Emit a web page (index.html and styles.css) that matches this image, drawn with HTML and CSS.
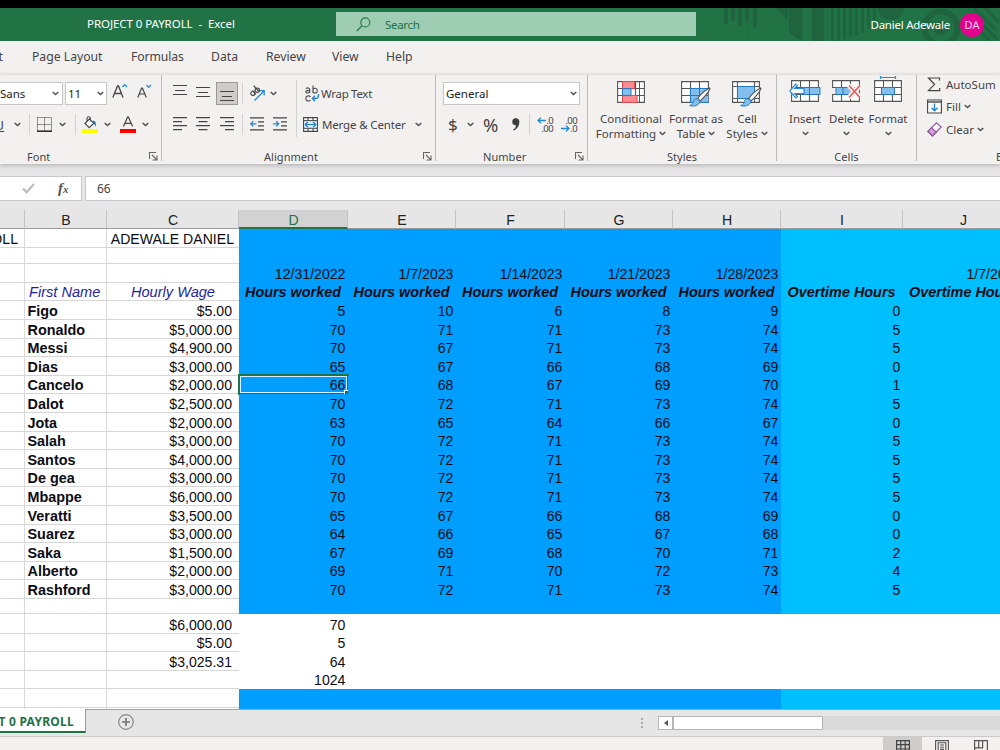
FILE: index.html
```html
<!DOCTYPE html>
<html lang="en">
<head>
<meta charset="utf-8">
<title>PROJECT 0 PAYROLL - Excel</title>
<link rel="stylesheet" href="styles.css">
</head>
<body>
<svg class="defs" aria-hidden="true">
  <symbol id="chev" viewBox="0 0 7 5"><path d="M.7 .9 3.5 3.6 6.3 .9" fill="none" stroke="#505050" stroke-width="1.4"/></symbol>
  <symbol id="launch" viewBox="0 0 9 9"><path d="M.5 7V.5H7M3 3l4.5 4.5M8 3.500V8H3.500" fill="none" stroke="#666" stroke-width="1.100"/></symbol>
  <symbol id="grid" viewBox="0 0 28 22"><path d="M.6.6h26.800v20.800H.6zM.6 7.500h26.800M.6 14.500h26.800M9.500.6v20.800M18.500.6v20.800" fill="#fff" stroke="#555" stroke-width="1.100"/></symbol>
  <symbol id="brush" viewBox="0 0 22 20"><path d="M20.500 1C16 3.500 11 8 8.600 11.500l2.600 2.400C15 10.500 19.500 5 21 1.500z" fill="#fff" stroke="#555" stroke-width="1.100"/><path d="M8.300 11.800c-2-.3-3.600.8-4 3C3.800 17 2.500 18.300.6 18.500c3.400 1.300 9.500.8 10.400-4.500z" fill="#83beec" stroke="#2478be" stroke-width=".9"/></symbol>
</svg>

<div class="app">
  <div class="top-strip"></div>
  <header class="titlebar">
    <div class="doc-title">PROJECT 0 PAYROLL&nbsp; -&nbsp; Excel</div>
    <div class="search">
      <svg width="15" height="15" viewBox="0 0 15 15"><circle cx="9.300" cy="5.400" r="4.500" fill="none" stroke="#2f8055" stroke-width="1.200"/><path d="M6 8.700.8 14" stroke="#2f8055" stroke-width="1.400"/></svg>
      <span>Search</span>
    </div>
    <div class="account">
      <svg class="pattern" width="290" height="33" viewBox="0 0 290 33">
        <g fill="#1f633f">
          <path d="M14 0h4v16h-4zM21 0h4v13h-4zM28 0h4v18h-4zM35 0h4v13h-4zM43 0h4v20h-4z"/>
          <path d="M66 0h12v13zM79 0h13v33l-13-8zM102 0h12v33h-12z"/>
          <path d="M121 0h3v33h-3zM127 0h3v33h-3zM133 0h3v31h-3zM139 0h3v29h-3zM145 0h3v27h-3zM151 0h3v25h-3zM157 0h3v21h-3zM163 0h3v14h-3z"/>
          <path d="M168 0a13 12 0 0 0 26 0z"/><circle cx="231" cy="20" r="7"/>
        </g>
        <circle cx="231" cy="20" r="16.500" fill="none" stroke="#1f633f" stroke-width="6"/>
        <path d="M37.500 0v32" stroke="#1f633f" stroke-dasharray="1 1"/>
        <path d="m264 0 22 22M273-2l16 16M268 12l20 20M270 23l12 12" stroke="#1f633f" stroke-width="3"/>
      </svg>
      <span class="user">Daniel Adewale</span>
      <span class="avatar">DA</span>
    </div>
  </header>

  <nav class="tabs">
    <span class="tab t-insert">Insert</span><span class="tab t-page">Page Layout</span><span class="tab t-form">Formulas</span><span class="tab t-data">Data</span><span class="tab t-rev">Review</span><span class="tab t-view">View</span><span class="tab t-help">Help</span>
  </nav>

  <section class="ribbon">
    <div class="group g-font">
      <div class="row r1">
        <div class="box name"><span>Sans</span><svg class="chev"><use href="#chev"/></svg></div>
        <div class="box size"><span>11</span><svg class="chev"><use href="#chev"/></svg></div>
        <svg class="grow" width="16" height="16" viewBox="0 0 16 16"><path d="M.8 14.500 5.500 3h1L11 14.500M2.600 10.500h6.700" fill="none" stroke="#444" stroke-width="1.300"/><path d="m10.500 4 2.200-2.300L15 4" fill="none" stroke="#1e88cf" stroke-width="1.200"/></svg>
        <svg class="shrink" width="15" height="16" viewBox="0 0 15 16"><path d="M.8 14.500 4.600 5h.8l3.900 9.500M2.300 11h5.500" fill="none" stroke="#444" stroke-width="1.200"/><path d="m9.500 2 2.200 2.300L14 2" fill="none" stroke="#1e88cf" stroke-width="1.200"/></svg>
      </div>
      <div class="row r2">
        <span class="underline">U</span><svg class="chev c1"><use href="#chev"/></svg><i class="sep"></i>
        <svg class="borders" width="15" height="15" viewBox="0 0 15 15"><path d="M.5.5h14v13.500M.5.500v13.500M7.500.5v13.500M.5 7.500h14" fill="none" stroke="#333" stroke-dasharray="1 1"/><path d="M0 14.200h15" stroke="#222" stroke-width="1.500"/></svg><svg class="chev c2"><use href="#chev"/></svg><i class="sep s2"></i>
        <svg class="fill" width="16" height="17" viewBox="0 0 16 17"><path d="M3 7.500 7.500 2.800l4.200 4.700-4.500 4.200zM5 5.300V2.500a1.700 1.700 0 0 1 3.400 0v3" fill="#fff" stroke="#444" stroke-width="1.100"/><path d="M10.500 4.500c3 .2 3.800 2 3.300 6.500-1-2-1.400-3.500-2.300-4z" fill="#1c72b8"/><path d="M0 13h16v4H0z" fill="#ff0"/></svg><svg class="chev c3"><use href="#chev"/></svg>
        <svg class="fcolor" width="16" height="17" viewBox="0 0 16 17"><path d="M3.500 10.500 7.700.8h.6l4.200 9.700M5 7.300h6" fill="none" stroke="#444" stroke-width="1.200"/><path d="M0 13h16v4H0z" fill="red"/></svg><svg class="chev c4"><use href="#chev"/></svg>
      </div>
      <div class="label"><span>Font</span><svg class="launch"><use href="#launch"/></svg></div>
    </div>

    <div class="group g-align">
      <div class="align-body">
        <div class="align-grid">
          <svg width="14" height="24" viewBox="0 0 14 24"><path d="M0 4.500h14M2 9.500h10M0 13.500h14" stroke="#444" stroke-width="1.200"/></svg>
          <svg width="14" height="24" viewBox="0 0 14 24"><path d="M0 6.500h14M2 11.500h10M0 15.500h14" stroke="#444" stroke-width="1.200"/></svg>
          <span class="pressed"><svg width="14" height="22" viewBox="0 0 14 22"><path d="M0 9.500h14M2 14.500h10M0 18.500h14" stroke="#444" stroke-width="1.200"/></svg></span>
          <i class="sep"></i>
          <span class="orient"><svg width="17" height="17" viewBox="0 0 17 17"><g fill="none" stroke="#444" stroke-width="1.200"><circle cx="3.800" cy="8.500" r="2"/><path d="m3.500 5.500 3.400 3.800"/><circle cx="8.300" cy="5.200" r="2.200"/><path d="M4.700.7 10 6.600"/></g><path d="M5.500 15.500 15 6M10.500 5.700h4.700v4.800" fill="none" stroke="#2a86cc" stroke-width="1.300"/></svg><svg class="chev"><use href="#chev"/></svg></span>
          <svg width="14" height="14" viewBox="0 0 14 14"><path d="M0 .6h14M0 4.600h9M0 8.600h14M0 12.600h9" stroke="#444" stroke-width="1.200"/></svg>
          <svg width="14" height="14" viewBox="0 0 14 14"><path d="M0 .6h14M2.500 4.600h9M0 8.600h14M2.500 12.600h9" stroke="#444" stroke-width="1.200"/></svg>
          <svg width="14" height="14" viewBox="0 0 14 14"><path d="M0 .6h14M5 4.600h9M0 8.600h14M5 12.600h9" stroke="#444" stroke-width="1.200"/></svg>
          <i class="sep"></i>
          <span class="indents"><svg width="14" height="14" viewBox="0 0 14 14"><path d="M0 .8h14M8 4.800h6M8 8.800h6M0 12.800h14" stroke="#444" stroke-width="1.200"/><path d="M6.500 6.800H1M3.300 4.200.8 6.800l2.500 2.600" fill="none" stroke="#2a86cc" stroke-width="1.300"/></svg><svg width="14" height="14" viewBox="0 0 14 14"><path d="M0 .8h14M8 4.800h6M8 8.800h6M0 12.800h14" stroke="#444" stroke-width="1.200"/><path d="M0 6.800h5.500M3.200 4.200l2.500 2.600-2.500 2.600" fill="none" stroke="#2a86cc" stroke-width="1.300"/></svg></span>
        </div>
        <i class="sep tall"></i>
        <div class="wrap-col">
          <div class="cmd"><svg width="15" height="17" viewBox="0 0 15 17"><g fill="none" stroke="#444" stroke-width="1.100"><path d="M1 3.500c1.500-1 3.700-.7 3.700 1V8M4.700 5.300C2.500 5.300.8 5.700.8 6.800c0 1.700 3 1.500 3.900 0M8 .5V8M8 4.500c1-2 4.300-1.500 4.300 1.200S9 8.800 8 6.800M5.500 11.700C3.500 10.200.8 11 .8 13.500s2.700 3.200 4.700 1.800"/></g><path d="M13.500 9v1.500c0 2-1.500 3-3.500 3H7.500M10 10.800l-2.700 2.700 2.700 2.700" fill="none" stroke="#2a86cc" stroke-width="1.400"/></svg><span class="tx-wrap">Wrap Text</span></div>
          <div class="cmd"><svg width="15" height="15" viewBox="0 0 15 15"><path d="M.6.600h13.800v13.800H.6zM5 .5v3M10 .5v3M5 11.500v3M10 11.500v3" fill="#fff" stroke="#444" stroke-width="1.100"/><path d="M.6 3.600h13.800v7.700H.6z" fill="#d8ecfa" stroke="#444"/><path d="M2.500 7.500h10M4.800 5 2.300 7.500l2.500 2.500M10.200 5l2.500 2.500-2.500 2.500" fill="none" stroke="#1d80ca" stroke-width="1.200"/></svg><span class="tx-merge">Merge &amp; Center</span><svg class="chev"><use href="#chev"/></svg></div>
        </div>
      </div>
      <div class="label"><span>Alignment</span><svg class="launch"><use href="#launch"/></svg></div>
    </div>

    <div class="group g-num">
      <div class="row r1"><div class="box general"><span>General</span><svg class="chev"><use href="#chev"/></svg></div></div>
      <div class="row r2 numrow">
        <span class="dollar">$</span><svg class="chev"><use href="#chev"/></svg><span class="pct">%</span>
        <svg class="comma" width="8" height="13" viewBox="0 0 8 13"><path d="M3.600.3A3.300 3.300 0 0 1 7.300 4c0 4-2.300 7.300-5.800 8.500l-.5-.8C3 10.500 4 9 4 7.300A3.500 3.500 0 0 1 3.600.3" fill="#3c3c3c"/></svg>
        <i class="sep"></i>
        <span class="dec"><span><svg width="9" height="7" viewBox="0 0 9 7"><path d="M9 3.500H1M4 .6 1 3.500l3 2.900" fill="none" stroke="#1e88d4" stroke-width="1.300"/></svg>.0</span><span>.00</span></span>
        <span class="dec dec2"><span>.00</span><span><svg width="9" height="7" viewBox="0 0 9 7"><path d="M0 3.500h8M5 .6l3 2.900-3 2.900" fill="none" stroke="#1e88d4" stroke-width="1.300"/></svg>.0</span></span>
      </div>
      <div class="label"><span>Number</span><svg class="launch"><use href="#launch"/></svg></div>
    </div>

    <div class="group g-styles">
      <div class="bigs">
        <div class="big b-cond"><svg width="28" height="26" viewBox="0 0 28 26"><use href="#grid" width="28" height="22" y="2"/><path d="M22.500 2.500v21" stroke="#555"/><path d="M5.500 2.600h12v7h-12zM5.500 16.500h14.500v6.900H5.500z" fill="#ff8c92" stroke="#e8484e"/><path d="M5.500 9.600h8.500v7H5.500z" fill="#83beec" stroke="#2478be"/></svg><span class="t1">Conditional</span><span class="t2">Formatting <svg class="chev"><use href="#chev"/></svg></span></div>
        <div class="big b-fmt"><svg width="31" height="28" viewBox="0 0 31 28"><use href="#grid" width="28" height="22" y="2"/><path d="M9.500 9.500H27.400v13.900H9.500z" fill="#83beec"/><path d="M9.500 9.500h17.900M9.500 16.500h17.900M18.500 9.500v14M9.500 9.500v14M9.500 23.400h17.900" stroke="#2478be"/><use href="#brush" x="8" y="8" width="22" height="20"/></svg><span class="t1">Format as</span><span class="t2">Table <svg class="chev"><use href="#chev"/></svg></span></div>
        <div class="big b-cell"><svg width="31" height="28" viewBox="0 0 31 28"><path d="M.6 2.600h26.800v20.800H.6zM.6 7.500h26.800M.6 19.500h26.800M5.500 2.600v20.800M22.500 2.600v20.800" fill="#fff" stroke="#555" stroke-width="1.100"/><path d="M5.500 7.500h17v12h-17z" fill="#83beec" stroke="#2478be"/><use href="#brush" x="8" y="8" width="22" height="20"/></svg><span class="t1">Cell</span><span class="t2">Styles <svg class="chev"><use href="#chev"/></svg></span></div>
      </div>
      <div class="label"><span>Styles</span></div>
    </div>

    <div class="group g-cells">
      <div class="bigs">
        <div class="big b-ins"><svg width="32" height="28" viewBox="0 0 32 28"><use href="#grid" x="2" width="28" height="22" y="4"/><path d="M11 11.500h20v7H11z" fill="#83beec" stroke="#2478be"/><path d="M20.500 11.500v7" stroke="#2478be"/><path d="M15 12.500H5.500L8.500 9.500 6.700 8 .7 15l6 7 1.800-1.500-3-3H15z" fill="#f4f9fd" stroke="#2a8bd2" stroke-width="1.200"/></svg><span class="t1">Insert</span><svg class="chev"><use href="#chev"/></svg></div>
        <div class="big b-del"><svg width="31" height="28" viewBox="0 0 31 28"><use href="#grid" x="1" width="28" height="22" y="4"/><path d="M0 12h5v6H0z" fill="#f3f1f0"/><path d="M5 11.500h14l2 3.500-2 3.500H5z" fill="#83beec" stroke="#2478be"/><path d="M12 11.500v7" stroke="#2478be"/><path d="m18 9.500 11 12M29 9.500l-11 12" stroke="#f3f1f0" stroke-width="5"/><path d="m18 9.500 11 12M29 9.500l-11 12" stroke="#f0555a" stroke-width="1.500"/></svg><span class="t1">Delete</span><svg class="chev"><use href="#chev"/></svg></div>
        <div class="big b-for"><svg width="28" height="28" viewBox="0 0 28 28"><use href="#grid" width="28" height="22" y="4"/><path d="M7.500 11.500h13v7h-13z" fill="#83beec" stroke="#2478be"/><path d="M6.500 1.500h15M6.500 0v3M21.500 0v3" stroke="#2a8bd2" stroke-width="1.200"/></svg><span class="t1">Format</span><svg class="chev"><use href="#chev"/></svg></div>
      </div>
      <div class="label"><span>Cells</span></div>
    </div>

    <div class="group g-edit">
      <div class="editrows">
        <div class="cmd"><svg width="15" height="15" viewBox="0 0 15 15"><path d="M12.500 3.500V1H1.500l6 6.300-6 6.400h11.200V11" fill="none" stroke="#444" stroke-width="1.200"/></svg><span class="tx-auto">AutoSum</span></div>
        <div class="cmd"><svg width="15" height="15" viewBox="0 0 15 15"><path d="M.6 1h13.800v13H.6z" fill="#fff" stroke="#444" stroke-width="1.100"/><path d="M.6 3h13.800" stroke="#444" stroke-width="1.400"/><path d="M7.500 4.500v7M4.500 8.700l3 3 3-3" fill="none" stroke="#1e82cc" stroke-width="1.400"/></svg><span class="tx-fill">Fill</span><svg class="chev"><use href="#chev"/></svg></div>
        <div class="cmd"><svg width="15" height="15" viewBox="0 0 15 15"><path d="M9.500.8 14.200 5 5.500 14 .8 9.500z" fill="#fff" stroke="#8f5399" stroke-width="1.100"/><path d="M4.500 5.700 9.300 10l-3.800 4L.8 9.500z" fill="#cf9fd6" stroke="#8f5399" stroke-width="1.100"/></svg><span class="tx-clear">Clear</span><svg class="chev"><use href="#chev"/></svg></div>
      </div>
      <div class="label"><span>Editing</span></div>
    </div>
  </section>

  <section class="formula">
    <div class="fx-box">
      <svg width="13" height="11" viewBox="0 0 13 11"><path d="m1 5.500 3.500 3.800L12 1" fill="none" stroke="#bdbdbd" stroke-width="2.200"/></svg>
      <span class="fx">f<small>x</small></span>
    </div>
    <div class="fx-value">66</div>
  </section>

  <main class="sheet" id="sheet"></main>

  <footer class="sheetbar">
    <div class="sheet-tab">PROJECT 0 PAYROLL</div>
    <svg class="add" width="16" height="16" viewBox="0 0 16 16"><circle cx="8" cy="8" r="7.300" fill="none" stroke="#8a8a8a" stroke-width="1.200"/><path d="M8 4v8M4 8h8" stroke="#777" stroke-width="1.700"/></svg>
    <div class="dots"><i></i><i></i><i></i></div>
    <div class="scroll"><span class="arrow"></span><span class="thumb"></span></div>
  </footer>
  <div class="status">
    <span class="vw on"><svg width="14" height="14" viewBox="0 0 14 14"><path d="M.6.6h12.800v12.800H.6zM.6 4.700h12.800M.6 9h12.800M4.800.6v13M9.200.6v13" fill="none" stroke="#444" stroke-width="1.200"/></svg></span>
    <span class="vw"><svg width="14" height="14" viewBox="0 0 14 14"><path d="M.6.6h12.800v12.800H.6zM3.200 13V2.700h7.600V13M5 5h4M5 7.200h4M5 9.400h4" fill="none" stroke="#555" stroke-width="1.100"/></svg></span>
    <span class="vw"><svg width="14" height="14" viewBox="0 0 14 14"><path d="M.6 13.400V.6h12.800v12.800M.6 7.800h8V.6M4.700.6v7" fill="none" stroke="#555" stroke-width="1.200"/></svg></span>
  </div>
</div>
<script src="sheet.js"></script>
</body>
</html>
```
FILE: styles.css
```css
* { box-sizing: border-box; }
body { margin: 0; overflow: hidden; font-family: "Noto Sans", "Open Sans", sans-serif; font-size: 11.500px; color: #444; }
.defs { position: absolute; width: 0; height: 0; }
.app { width: 1000px; height: 750px; overflow: hidden; display: flex; flex-direction: column; background: #e6e6e6; }
svg { display: block; flex: none; }
.chev { width: 7px; height: 5px; }
.launch { width: 9px; height: 9px; }
span { white-space: nowrap; }

.top-strip { height: 8px; background: #000; flex: none; }
.titlebar { height: 33px; flex: none; background: #217346; display: flex; color: #fff; }
.doc-title { width: 336px; padding-left: 87px; line-height: 31px; font-size: 11.5px; white-space: nowrap; letter-spacing: -.06px; }
.search { width: 360px; height: 24px; margin-top: 4px; background: #9fcdb3; color: #217346; display: flex; align-items: center; padding-left: 20px; gap: 14px; letter-spacing: -.3px; }
.account { flex: 1; position: relative; display: flex; align-items: center; justify-content: flex-end; padding-right: 16px; gap: 10px; }
.pattern { position: absolute; left: 14px; top: 0; }
.user, .avatar { position: relative; }
.user { letter-spacing: -.25px; }
.avatar { width: 24px; height: 24px; border-radius: 50%; background: #e3008c; line-height: 24px; text-align: center; font-size: 11px; color: #ffd3ee; }

.tabs { height: 34px; flex: none; background: #f3f1f0; display: flex; line-height: 31px; font-size: 12.2px; }
.tab { flex: none; }
.t-insert { width: 32px; direction: rtl; padding-right: 29px; }
.t-page { width: 99px; } .t-form { width: 80px; letter-spacing: -.1px; } .t-data { width: 55px; } .t-rev { width: 66px; } .t-view { width: 54px; }

.ribbon { height: 89px; flex: none; display: flex; background: #f3f1f0; position: relative; box-shadow: 0 1px 5px rgba(0,0,0,.25); }
.group { height: 86px; flex: none; border-right: 1px solid #bdbbb9; display: flex; flex-direction: column; }
.g-font { width: 162px; } .g-align { width: 274px; } .g-num { width: 152px; } .g-styles { width: 189px; } .g-cells { width: 140px; } .g-edit { width: 180px; border: 0; }
.row { display: flex; align-items: center; height: 27px; flex: none; }
.r1 { height: 36px; }
.label { margin: auto 0 -3px; height: 15px; display: flex; align-items: center; font-size: 11px; padding-bottom: 1px; letter-spacing: .05px; }
.label .launch { margin-left: auto; margin-right: 3px; }
.box { height: 23px; background: #fff; border: 1px solid #c6c6c6; display: flex; align-items: center; justify-content: space-between; color: #222; padding-right: 2px; flex: none; }
.name { width: 63px; border-left: 0; padding-right: 3px; }
.size { width: 42px; margin-left: 2px; padding-left: 2px; }
.grow { margin: 0 0 4px 5px; } .shrink { margin: 0 0 4px 9px; }
.sep { width: 1px; height: 21px; background: #d4d2d0; flex: none; }
.underline { width: 4px; direction: rtl; text-decoration: underline; font-size: 13px; overflow: hidden; }
.c1 { margin-left: 10px; } .g-font .sep { margin-left: 8px; }
.borders { margin-left: 7px; } .c2 { margin-left: 7px; } .g-font .s2 { margin-left: 9px; }
.fill { margin-left: 6px; } .c3 { margin-left: 6px; } .fcolor { margin-left: 9px; } .c4 { margin-left: 6px; }
.g-font .label { padding-left: 27px; }

.align-body { display: flex; height: 68px; }
.align-grid { width: 134px; padding-left: 6px; display: grid; grid-template-columns: 23px 24px 24px 4px 53px; grid-template-rows: 36px 26px; justify-items: center; align-items: center; }
.align-grid .sep { justify-self: end; }
.pressed { width: 22px; height: 23px; border: 1px solid #9c9a98; background: #cfcdcb; display: flex; justify-content: center; align-items: center; }
.orient { display: flex; align-items: center; gap: 4px; justify-self: start; margin-left: 6px; }
.indents { display: flex; gap: 9px; justify-self: start; margin-left: 7px; }
.tall { height: 57px; margin-top: 5px; }
.wrap-col { padding-left: 6px; display: grid; grid-template-rows: 36px 27px; align-items: center; }
.cmd { display: flex; align-items: center; gap: 4px; }
.cmd .chev { margin-left: 5px; }
.wrap-col .cmd:first-child { padding-left: 2px; gap: 1px; }
.tx-wrap { letter-spacing: -.3px; }
.tx-merge { letter-spacing: -.15px; }
.g-align .label { padding-left: 102px; }

.general { width: 137px; margin-left: 7px; padding-left: 2px; }
.dollar { font-size: 17px; margin-left: 12px; width: 12px; } .numrow .chev { margin-left: 7px; }
.pct { font-size: 18.5px; margin-left: 9px; width: 16px; letter-spacing: -1px; } .comma { margin-left: 13px; }
.numrow .sep { margin-left: 9px; }
.dec { display: flex; flex-direction: column; font-size: 9.5px; line-height: 8px; align-items: flex-end; margin-left: 7px; width: 16px; }
.dec > span { display: flex; align-items: center; letter-spacing: -.6px; }
.dec2 { margin-left: 8px; }
.g-num .label { padding-left: 47px; }

.bigs { display: flex; height: 68px; }
.big { display: flex; flex-direction: column; align-items: center; flex: none; }
.big > svg:first-child { height: 28px; margin-top: 4px; }
.big .t1, .big .t2 { line-height: 15px; }
.big .t1 { margin-top: 4px; }
.big .t2 { display: flex; align-items: center; gap: 3px; }
.big > .chev { margin-top: 5px; }
.b-cond { width: 86px; } .b-cond > svg:first-child { height: 26px; margin-bottom: 2px; } .b-fmt { width: 44px; } .b-cell { width: 58px; }
.g-styles .label, .g-cells .label { justify-content: center; }
.g-cells { padding-left: 6px; }
.g-cells .label { padding-right: 6px; }
.b-ins { width: 44px; } .b-del { width: 39px; } .b-for { width: 44px; }
.g-cells .big > svg:first-child { margin-top: 1px; } .g-cells .t1 { margin-top: 7px; }
.editrows { height: 68px; padding-left: 10px; margin-top: -2px; }
.editrows .cmd { height: 22.500px; gap: 4px; }
.editrows .cmd .chev { margin-left: -1px; }
.g-edit .label { padding-left: 79px; }

.formula { height: 46px; flex: none; padding: 12px 0 0; display: flex; gap: 3px; }
.fx-box { width: 82px; height: 25px; background: #fff; border: 1px solid #c8c8c8; border-left: 0; display: flex; align-items: center; padding-left: 22px; }
.fx { margin-left: 23px; font: italic bold 15px "Liberation Serif", serif; color: #555; }
.fx small { font-size: 11px; }
.fx-value { flex: 1; height: 25px; background: #fff; border: 1px solid #c8c8c8; border-right: 0; line-height: 23px; padding-left: 11px; font-size: 12px; }

.sheet { height: 499px; flex: none; overflow: hidden; background: #fff; font-family: "Liberation Sans", Arial, sans-serif; font-size: 14.100px; color: #0c0c14; display: grid; grid-template-columns: 25px 82px 132px 109px 108px 109px 108px 108px 122px 121px; grid-auto-flow: row; align-content: start; }
.head { height: 19px; background: #e6e6e6; border-right: 1px solid #c4c4c4; border-bottom: 1px solid #9b9b9b; text-align: center; line-height: 20px; color: #222; padding-left: 1px; }
.head.sel { background: #d2d2d2; color: #217346; border-bottom: 2px solid #217346; }
.cell { display: flex; align-items: flex-end; justify-content: flex-end; line-height: 17px; padding-right: 2.600px; white-space: nowrap; position: relative; }
.line { border-right: 1px solid #d9d9d9; border-bottom: 1px solid #d6d6d6; line-height: 15px; }
.line.c2 { margin: 0; border-right: 0; padding-right: 7px; }
.line.c1 { margin: 0; justify-content: flex-start; padding: 0 0 0 2.500px; font-weight: bold; font-size: 14.400px; }
.line.c0 { padding-right: 6px; }
.line.title { padding-right: 5px; }
.blue { background: #009fff; }
.cyan { background: #00bfff; }
.th { justify-content: center; padding: 0 1px 0 0; font-size: 14.400px; font-weight: bold; font-style: italic; }
.line.th { color: #1f1f9e; font-weight: normal; font-size: 14.600px; line-height: 16px; }
.line.c1.th { padding-left: 4px; }
.line.c2.th { padding-right: 24px; justify-content: flex-end; }
.active::before { content: ""; position: absolute; inset: -2px -1px -1px -1px; border: 2px solid #217346; box-shadow: inset 0 0 0 1px #d8efff; }
.active::after { content: ""; position: absolute; right: -2px; bottom: -2px; width: 5px; height: 5px; background: #217346; outline: 1px solid #fff; }

.sheetbar { height: 28px; flex: none; background: #e6e6e6; border-top: 1px solid #a3a3a3; border-bottom: 1px solid #cacaca; display: flex; align-items: flex-start; }
.sheet-tab { width: 86px; height: 24px; margin-top: -1px; background: #fff; border-right: 1px solid #999; border-bottom: 2px solid #217346; color: #217346; font-weight: bold; font-size: 12px; line-height: 25px; white-space: nowrap; display: flex; justify-content: flex-end; padding-right: 11px; overflow: hidden; letter-spacing: .25px; }
.add { margin: 4px 0 0 32px; }
.dots { width: 2px; margin: 8px 0 0 507px; display: grid; gap: 2px; }
.dots i { width: 2px; height: 2px; background: #aaa; }
.scroll { flex: 1; height: 14px; margin: 6px 0 0 15px; background: #dadada; display: flex; }
.arrow { width: 15px; height: 14px; background: #fff; border: 1px solid #b5b5b5; display: flex; align-items: center; justify-content: center; }
.arrow::before { content: ""; border: 3.500px solid transparent; border-right: 4px solid #555; border-left: 0; }
.thumb { width: 150px; height: 14px; background: #fff; border: 1px solid #b5b5b5; }
.status { height: 13px; background: #f3f1f0; display: flex; justify-content: flex-end; }
.vw { width: 39px; height: 13px; padding-top: 3px; display: flex; justify-content: center; overflow: hidden; }
.on { background: #cfcdcb; }
```
FILE: sheet.js
```js
const heads = ["", "B", "C", "D", "E", "F", "G", "H", "I", "J"];
const edges = [229, 248, 264, 283, 301, 320, 339, 357, 376, 394, 413, 432, 450, 469, 487, 506, 525, 543, 562, 580, 599, 614, 634, 652, 671, 689, 708, 727];
const hw = "Hours worked", ot = "Overtime Hours";
const rows = [
  ["PAYROLL", "", "ADEWALE DANIEL"],
  [],
  ["", "", "", "12/31/2022", "1/7/2023", "1/14/2023", "1/21/2023", "1/28/2023", "", "1/7/2023"],
  ["", "First Name", "Hourly Wage", hw, hw, hw, hw, hw, ot, ot],
  ["", "Figo", "$5.00", 5, 10, 6, 8, 9, 0],
  ["", "Ronaldo", "$5,000.00", 70, 71, 71, 73, 74, 5],
  ["", "Messi", "$4,900.00", 70, 67, 71, 73, 74, 5],
  ["", "Dias", "$3,000.00", 65, 67, 66, 68, 69, 0],
  ["", "Cancelo", "$2,000.00", 66, 68, 67, 69, 70, 1],
  ["", "Dalot", "$2,500.00", 70, 72, 71, 73, 74, 5],
  ["", "Jota", "$2,000.00", 63, 65, 64, 66, 67, 0],
  ["", "Salah", "$3,000.00", 70, 72, 71, 73, 74, 5],
  ["", "Santos", "$4,000.00", 70, 72, 71, 73, 74, 5],
  ["", "De gea", "$3,000.00", 70, 72, 71, 73, 74, 5],
  ["", "Mbappe", "$6,000.00", 70, 72, 71, 73, 74, 5],
  ["", "Veratti", "$3,500.00", 65, 67, 66, 68, 69, 0],
  ["", "Suarez", "$3,000.00", 64, 66, 65, 67, 68, 0],
  ["", "Saka", "$1,500.00", 67, 69, 68, 70, 71, 2],
  ["", "Alberto", "$2,000.00", 69, 71, 70, 72, 73, 4],
  ["", "Rashford", "$3,000.00", 70, 72, 71, 73, 74, 5],
  [],
  ["", "", "$6,000.00", 70],
  ["", "", "$5.00", 5],
  ["", "", "$3,025.31", 64],
  ["", "", "", 1024],
  [],
  []
];
const sheet = document.getElementById("sheet");
const add = (cls, text) => {
  const el = document.createElement("div");
  el.className = cls;
  el.textContent = text === undefined ? "" : text;
  sheet.append(el);
};
heads.forEach((h, c) => add("head" + (c === 3 ? " sel" : ""), h));
rows.forEach((row, r) => {
  for (let c = 0; c < 10; c++) {
    let cls = "cell";
    if (c < 3) cls += " line c" + c;
    else if (r < 21 || r > 24) cls += c < 8 ? " blue" : " cyan";
    if (r === 0 && c === 2) cls += " title";
    if (r === 3) cls += " th";
    if (r === 8 && c === 3) cls += " active";
    add(cls, row[c]);
  }
});
sheet.style.gridTemplateRows = "19px " + rows.map((_, r) => edges[r + 1] - edges[r] + "px").join(" ");
```
